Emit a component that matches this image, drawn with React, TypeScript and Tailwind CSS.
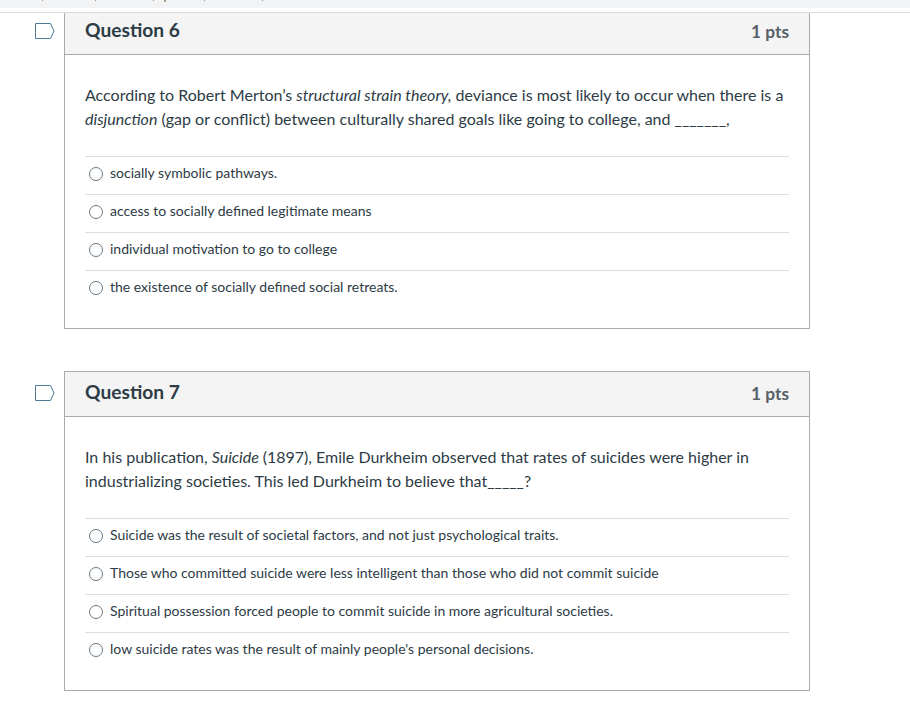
const questions = [
  {
    n: 6,
    mt: "",
    body: (
      <>
        According to Robert Merton’s <em>structural strain theory,</em> deviance is most likely to occur when there is a{" "}
        <em>disjunction</em> (gap or conflict) between culturally shared goals like going to college, and _______,
      </>
    ),
    options: [
      "socially symbolic pathways.",
      "access to socially defined legitimate means",
      "individual motivation to go to college",
      "the existence of socially defined social retreats.",
    ],
  },
  {
    n: 7,
    mt: "mt-[42px]",
    body: (
      <>
        In his publication, <em>Suicide </em>(1897), Emile Durkheim observed that rates of suicides were higher in
        industrializing societies. This led Durkheim to believe that_____?
      </>
    ),
    options: [
      "Suicide was the result of societal factors, and not just psychological traits.",
      "Those who committed suicide were less intelligent than those who did not commit suicide",
      "Spiritual possession forced people to commit suicide in more agricultural societies.",
      "low suicide rates was the result of mainly people's personal decisions.",
    ],
  },
];

function Flag({ top }: { top: string }) {
  return (
    <svg width="20" height="16" viewBox="0 0 20 16" className={`absolute left-[-30px] ${top}`}>
      <path d="M0.5 0.5H15.5L19 8L15.5 15.5H0.5Z" fill="white" stroke="#4f7a96" strokeWidth="1" />
    </svg>
  );
}

export default function App() {
  return (
    <div className="w-[910px] h-[713px] bg-white overflow-hidden font-['Lato','sans-serif'] text-[#2d3b45]">
      <div className="h-2 bg-[#f1f3f4] flex items-start pl-[42px] gap-[52px]">
        <span className="w-px h-px bg-[#a89a86]" />
        <span className="w-px h-px bg-[#a89a86]" />
        <span className="w-px h-px bg-[#a89a86] ml-[5px]" />
        <span className="w-[2px] h-[2px] bg-[#a89a86] ml-[-42px]" />
        <span className="w-px h-px bg-[#8a93a8] ml-[-14px]" />
        <span className="w-px h-px bg-[#8a93a8] ml-[5px]" />
      </div>
      <div className="h-[5px] border-b border-[#dddddd]" />
      <div className="ml-[64px] w-[746px]">
        {questions.map((q) => (
          <div key={q.n} className={`relative border-x border-b border-[#aaaaaa] ${q.n === 7 ? "border-t" : ""} ${q.mt}`}>
            <Flag top={q.n === 6 ? "top-[10px]" : "top-[13px]"} />
            <div className={`flex items-start justify-between bg-[#f4f4f5] border-b border-[#aaaaaa] pl-5 pr-5 ${q.n === 6 ? "h-[42px] pt-0" : "h-[45px] pt-[3px]"}`}>
              <h2 className="text-[19.2px] font-bold leading-[34px]">Question {q.n}</h2>
              <div className="text-[17.3px] font-bold leading-[24px] text-[#555f68] mt-[7px]">1 pts</div>
            </div>
            <div className="px-5 pt-7 pb-5">
              <p className="text-[16px] leading-6 w-[704px]">{q.body}</p>
              <ul className="mt-[25px]">
                {q.options.map((o) => (
                  <li key={o} className="flex items-start h-[38px] border-t border-[#dddddd] pl-1 pt-[6px] text-[14px] leading-5">
                    <span className="w-[14px] h-[14px] rounded-full border border-[#6b7780] bg-white mr-[7px] mt-[4px] shrink-0" />
                    <span className="text-[#2d3b45]">{o}</span>
                  </li>
                ))}
              </ul>
            </div>
          </div>
        ))}
      </div>
    </div>
  );
}
